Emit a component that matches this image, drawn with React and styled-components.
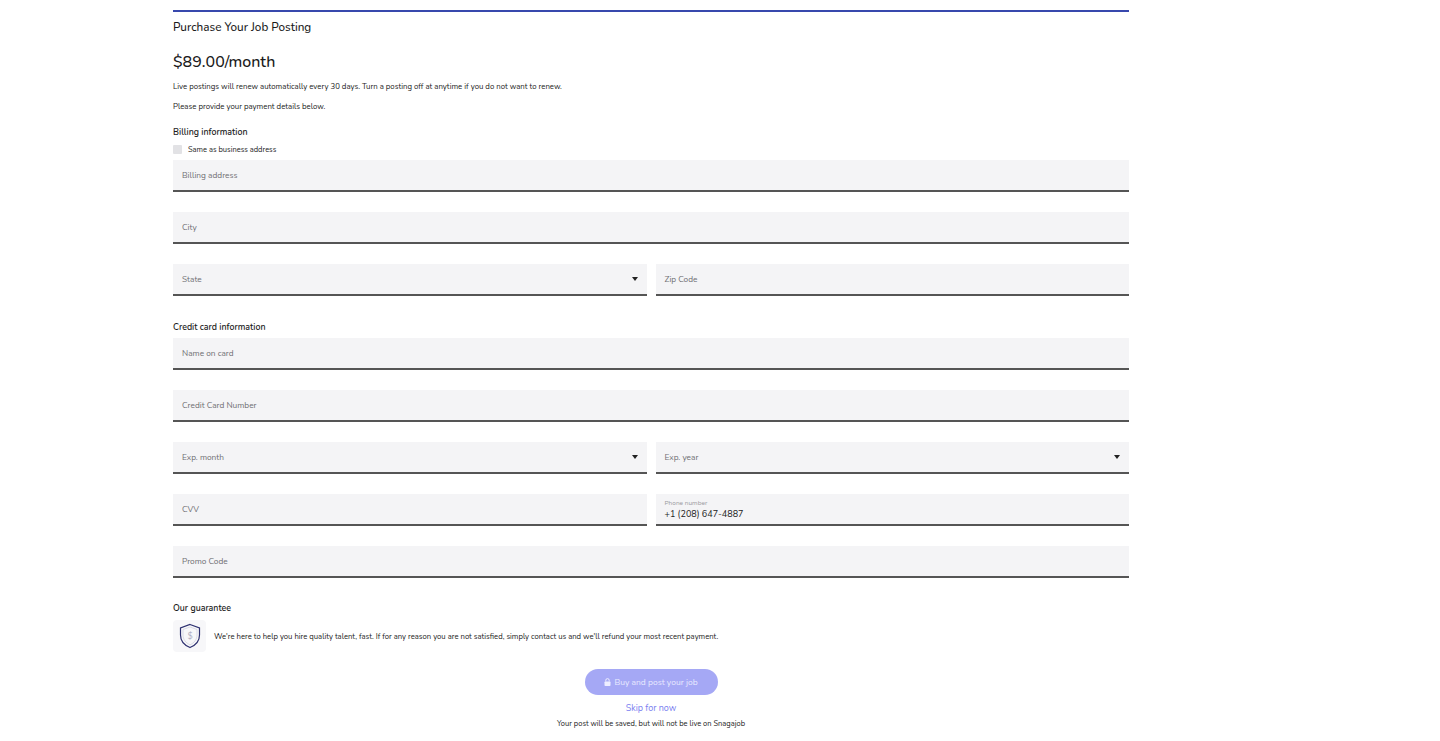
import React from "react";
import styled, { createGlobalStyle } from "styled-components";

const Global = createGlobalStyle`
  body { margin: 0; background: #fff; font-family: "Nunito", Lato, "Noto Sans", sans-serif; color: #1b1b1b; }
`;

const Page = styled.div`
  width: 956px;
  margin-left: 173px;
  padding-top: 10px;
`;
const TopBar = styled.div`height: 2px; background: #3848ad;`;
const Title = styled.h1`font-size: 11.7px; font-weight: 500; margin: 7px 0 0; line-height: 16px;`;
const Price = styled.div`font-size: 16px; font-weight: 500; margin-top: 17px; line-height: 20px;`;
const Small = styled.p`font-size: 7.8px; margin: ${p => p.$mt}px 0 0; line-height: 10px;`;
const Section = styled.h2`font-size: 8.8px; font-weight: 600; margin: ${p => p.$mt}px 0 0; line-height: 12px;`;
const CheckRow = styled.label`display: flex; align-items: center; gap: 6px; font-size: 7.5px; margin-top: 6px; height: 10px;`;
const Box = styled.span`width: 9px; height: 9px; background: #e2e2e5; border-radius: 1px;`;
const Fields = styled.div`display: flex; flex-direction: column; gap: 20px; margin-top: ${p => p.$mt}px;`;
const Row = styled.div`display: flex; gap: 9px;`;
const Field = styled.div`
  flex: 1 1 0; min-height: 30px; height: 30px; box-sizing: content-box; background: #f4f4f6; border-bottom: 2px solid #555;
  display: flex; align-items: center; justify-content: space-between; padding: 0 9px;
  font-size: 8.3px; color: #6f6f73;
  ${Fields} > & { flex: none; }
`;
const Caret = styled.span`width:0;height:0;border-left:3px solid transparent;border-right:3px solid transparent;border-top:4px solid #222;`;
const Stack = styled.div`display:flex;flex-direction:column;gap:1px;`;
const Tiny = styled.span`font-size: 6.5px; color: #9a9a9e;`;
const Value = styled.span`font-size: 9px; color: #222;`;
const Guarantee = styled.div`display:flex; align-items:center; gap: 8px; margin-top: 6px; font-size: 7.7px;`;
const IconBox = styled.div`width: 33px; height: 32px; background: #f7f7f9; border-radius: 4px; display:flex; align-items:center; justify-content:center;`;
const Actions = styled.div`display:flex; flex-direction:column; align-items:center; margin-top: 17px;`;
const Button = styled.button`
  width: 133px; height: 26px; border: none; border-radius: 13px; background: #a5a8f5; color: #e9eaff;
  font-family: inherit; font-size: 8.5px; display:flex; align-items:center; justify-content:center; gap: 3px;
`;
const Skip = styled.a`font-size: 9px; color: #7b7ff0; margin-top: 7px; line-height: 12px;`;
const Note = styled.div`font-size: 7.5px; margin-top: 4px;`;

const F = ({ label, select }) => (
  <Field>{label}{select && <Caret />}</Field>
);

export default function App() {
  return (
    <>
      <Global />
      <Page>
        <TopBar />
        <Title>Purchase Your Job Posting</Title>
        <Price>$89.00/month</Price>
        <Small $mt={10}>Live postings will renew automatically every 30 days. Turn a posting off at anytime if you do not want to renew.</Small>
        <Small $mt={10}>Please provide your payment details below.</Small>
        <Section $mt={14}>Billing information</Section>
        <CheckRow><Box />Same as business address</CheckRow>
        <Fields $mt={6}>
          <F label="Billing address" />
          <F label="City" />
          <Row><F label="State" select /><F label="Zip Code" /></Row>
        </Fields>
        <Section $mt={25}>Credit card information</Section>
        <Fields $mt={5}>
          <F label="Name on card" />
          <F label="Credit Card Number" />
          <Row><F label="Exp. month" select /><F label="Exp. year" select /></Row>
          <Row>
            <F label="CVV" />
            <Field><Stack><Tiny>Phone number</Tiny><Value>+1 (208) 647-4887</Value></Stack></Field>
          </Row>
          <F label="Promo Code" />
        </Fields>
        <Section $mt={24}>Our guarantee</Section>
        <Guarantee>
          <IconBox>
            <svg width="24" height="26" viewBox="0 0 24 26" fill="none" stroke="#2d3070" strokeWidth="1.2">
              <path d="M12 1.5 L21.5 5 V12 C21.5 18 17 22.5 12 24.5 C7 22.5 2.5 18 2.5 12 V5 Z" />
              <path d="M12 4 L19 6.5 V12 C19 16.5 16 20 12 21.8 C8 20 5 16.5 5 12 V6.5 Z" stroke="#c8c8d8" strokeWidth="0.6" />
              <text x="12" y="16" fontSize="9" textAnchor="middle" fill="#b0b0c4" stroke="none" fontFamily="Lato">$</text>
            </svg>
          </IconBox>
          We're here to help you hire quality talent, fast. If for any reason you are not satisfied, simply contact us and we'll refund your most recent payment.
        </Guarantee>
        <Actions>
          <Button>
            <svg width="7" height="8" viewBox="0 0 7 8"><rect x="0.5" y="3.5" width="6" height="4.5" rx="0.8" fill="#eef"/><path d="M1.8 3.5V2.3a1.7 1.7 0 0 1 3.4 0v1.2" stroke="#eef" fill="none" strokeWidth="1"/></svg>
            Buy and post your job
          </Button>
          <Skip>Skip for now</Skip>
          <Note>Your post will be saved, but will not be live on Snagajob</Note>
        </Actions>
      </Page>
    </>
  );
}
